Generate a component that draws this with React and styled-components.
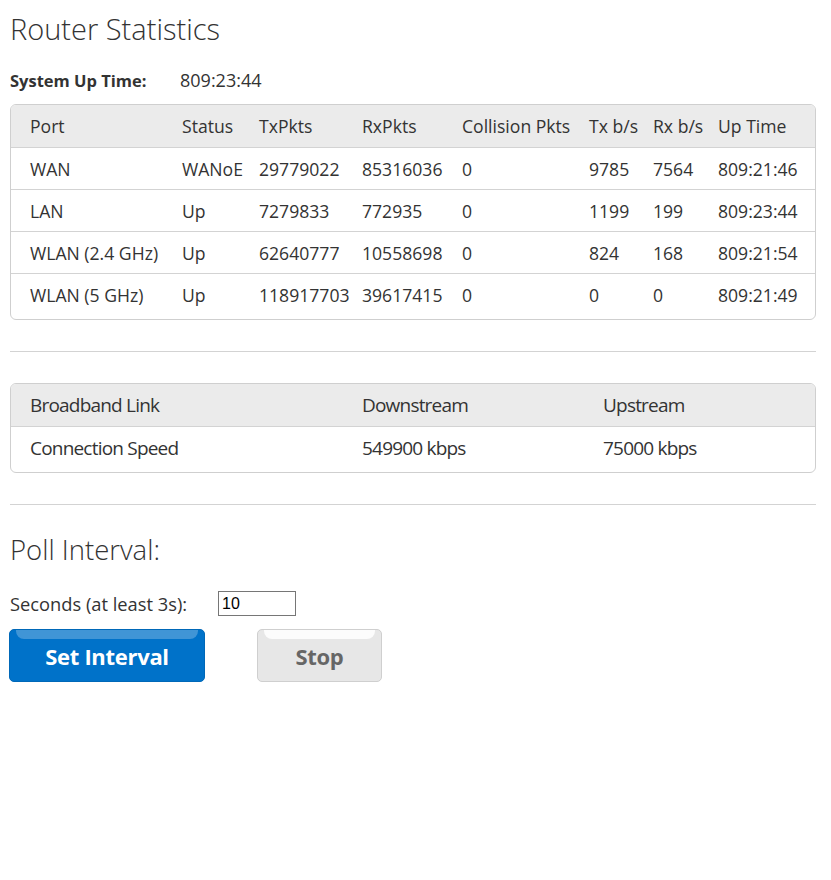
import React from "react";
import styled, { createGlobalStyle } from "styled-components";

const Global = createGlobalStyle`
  html, body { margin: 0; padding: 0; background: #fff; }
  body { font-family: "Open Sans", "Noto Sans", sans-serif; color: #333; }
`;

const Page = styled.div`
  padding: 0 15px 0 10px;
  width: 806px;
  min-height: 880px;
`;

const Title = styled.h1`
  margin: 0;
  padding-top: 11px;
  font-size: 29px;
  font-weight: 300;
  line-height: 36px;
  color: #333;
`;

const UpTime = styled.div`
  display: flex;
  align-items: baseline;
  margin-top: 22px;
  font-size: 18px;
  line-height: 22px;
`;

const UpLabel = styled.span`
  width: 170px;
  font-weight: 700;
  font-size: 16.5px;
`;

const Card = styled.div`
  margin-top: ${(p) => p.$mt}px;
  border: 1px solid #cfcfcf;
  border-radius: 6px;
  overflow: hidden;
  padding-bottom: 4px;
`;

const Table = styled.table`
  width: 100%;
  border-collapse: collapse;
  table-layout: fixed;
  font-family: "Open Sans", "Noto Sans", sans-serif;
  font-size: ${(p) => (p.$condensed ? "19px" : "17.6px")};
  letter-spacing: ${(p) => (p.$condensed ? "-0.8px" : "0")};
  color: #333;
`;

const HeadRow = styled.tr`
  background: #ebebeb;
`;

const Cell = styled.td`
  box-sizing: border-box;
  height: 42px;
  padding: 1px 0 0 0;
  text-align: left;
  font-weight: 400;
  white-space: nowrap;
  border-top: ${(p) => (p.$first ? "none" : "1px solid #d3d3d3")};
  &:first-child { padding-left: 19px; }
`;

const Rule = styled.hr`
  margin: ${(p) => p.$m};
  border: none;
  border-top: 1px solid #d3d3d3;
  height: 0;
`;

const SubTitle = styled.h2`
  margin: 28px 0 0 0;
  font-size: 27.5px;
  font-weight: 300;
  line-height: 34px;
  color: #333;
`;

const Field = styled.div`
  display: flex;
  align-items: center;
  margin-top: 24px;
  font-size: 18.3px;
`;

const FieldLabel = styled.label`
  width: 208px;
`;

const Input = styled.input`
  box-sizing: border-box;
  width: 78px;
  height: 25px;
  padding: 1px 3px;
  border: 1px solid #767676;
  border-radius: 0;
  font-family: "Liberation Sans", Arial, sans-serif;
  font-size: 16px;
  color: #000;
`;

const Buttons = styled.div`
  display: flex;
  gap: 52px;
  margin-top: 13px;
  margin-left: -1px;
`;

const Button = styled.button`
  position: relative;
  width: ${(p) => p.$w}px;
  height: 53px;
  border-radius: 5px;
  font-family: "Open Sans", sans-serif;
  font-weight: 700;
  font-size: 22px;
  letter-spacing: -0.3px;
  cursor: pointer;
  overflow: hidden;
  background: ${(p) => (p.$primary ? "#0072c9" : "#e7e7e7")};
  color: ${(p) => (p.$primary ? "#fff" : "#666")};
  border: ${(p) => (p.$primary ? "1px solid #0068b8" : "1px solid #cfcfcf")};
  &::before {
    content: "";
    position: absolute;
    left: 6px;
    right: 6px;
    top: 0;
    height: 9px;
    border-radius: 0 0 8px 8px;
    background: ${(p) => (p.$primary ? "rgba(255,255,255,0.25)" : "rgba(255,255,255,0.85)")};
  }
`;

const portCols = [171, 77, 103, 100, 127, 64, 65, 97];
const portHead = ["Port", "Status", "TxPkts", "RxPkts", "Collision Pkts", "Tx b/s", "Rx b/s", "Up Time"];
const portRows = [
  ["WAN", "WANoE", "29779022", "85316036", "0", "9785", "7564", "809:21:46"],
  ["LAN", "Up", "7279833", "772935", "0", "1199", "199", "809:23:44"],
  ["WLAN (2.4 GHz)", "Up", "62640777", "10558698", "0", "824", "168", "809:21:54"],
  ["WLAN (5 GHz)", "Up", "118917703", "39617415", "0", "0", "0", "809:21:49"],
];

const linkCols = [351, 241, 212];

export default function App() {
  return (
    <>
      <Global />
      <Page>
        <Title>Router Statistics</Title>
        <UpTime>
          <UpLabel>System Up Time:</UpLabel>
          <span>809:23:44</span>
        </UpTime>

        <Card $mt={12}>
          <Table>
            <colgroup>
              {portCols.map((w, i) => (
                <col key={i} style={{ width: w }} />
              ))}
            </colgroup>
            <thead>
              <HeadRow>
                {portHead.map((h, i) => (
                  <Cell as="th" key={i} $first>
                    {h}
                  </Cell>
                ))}
              </HeadRow>
            </thead>
            <tbody>
              {portRows.map((r, ri) => (
                <tr key={ri}>
                  {r.map((c, ci) => (
                    <Cell key={ci}>{c}</Cell>
                  ))}
                </tr>
              ))}
            </tbody>
          </Table>
        </Card>

        <Rule $m="31px 0 31px 0" />

        <Card $mt={0}>
          <Table $condensed>
            <colgroup>
              {linkCols.map((w, i) => (
                <col key={i} style={{ width: w }} />
              ))}
            </colgroup>
            <thead>
              <HeadRow>
                <Cell as="th" $first>Broadband Link</Cell>
                <Cell as="th" $first>Downstream</Cell>
                <Cell as="th" $first>Upstream</Cell>
              </HeadRow>
            </thead>
            <tbody>
              <tr>
                <Cell>Connection Speed</Cell>
                <Cell>549900 kbps</Cell>
                <Cell>75000 kbps</Cell>
              </tr>
            </tbody>
          </Table>
        </Card>

        <Rule $m="31px 0 0 0" />

        <SubTitle>Poll Interval:</SubTitle>
        <Field>
          <FieldLabel htmlFor="secs">Seconds (at least 3s):</FieldLabel>
          <Input id="secs" defaultValue="10" />
        </Field>
        <Buttons>
          <Button $primary $w={196}>Set Interval</Button>
          <Button $w={125}>Stop</Button>
        </Buttons>
      </Page>
    </>
  );
}
